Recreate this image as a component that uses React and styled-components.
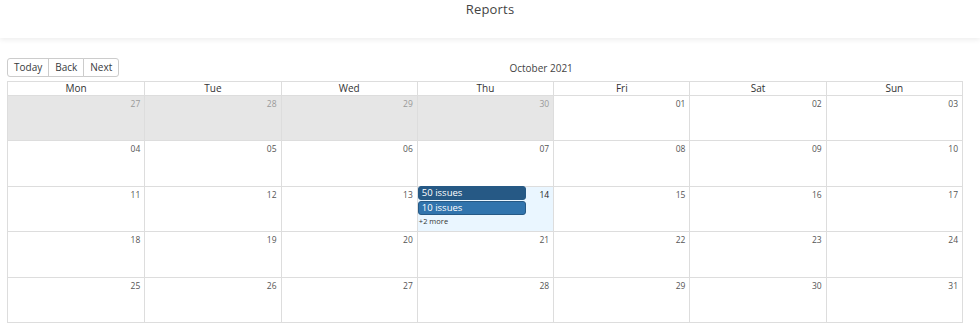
import React from "react";
import styled, { createGlobalStyle } from "styled-components";

const GlobalStyle = createGlobalStyle`
  body {
    margin: 0;
    background: #fff;
    font-family: "Open Sans", "Liberation Sans", sans-serif;
    color: #373a3c;
  }
`;

const TopBar = styled.header`
  height: 38px;
  display: flex;
  justify-content: center;
  background: #fff;
  box-shadow: 0 2px 5px rgba(0, 0, 0, 0.07);
`;

const Title = styled.h1`
  margin: 0;
  font-size: 13px;
  font-weight: 400;
  letter-spacing: 0.2px;
  color: #444;
`;

const CalendarWrap = styled.div`
  width: 956px;
  margin: 20px 0 0 7px;
`;

const Toolbar = styled.div`
  display: flex;
  align-items: center;
  height: 19px;
  margin-bottom: 4px;
`;

const ButtonGroup = styled.div`
  display: flex;
`;

const ToolButton = styled.button`
  font-family: inherit;
  font-size: 10px;
  color: #373a3c;
  background: #fff;
  border: 1px solid #ccc;
  margin-left: -1px;
  padding: 0 6px;
  height: 19px;
  line-height: 17px;
  cursor: pointer;

  &:first-child {
    margin-left: 0;
    border-radius: 3px 0 0 3px;
  }
  &:last-child {
    border-radius: 0 3px 3px 0;
  }
`;

const MonthLabel = styled.span`
  flex: 1;
  text-align: center;
  font-size: 10px;
  color: #444;
`;

const Grid = styled.div`
  display: grid;
  grid-template-columns: repeat(7, 1fr);
  border: 1px solid #ddd;
`;

const DayHead = styled.div`
  height: 13px;
  line-height: 13px;
  text-align: center;
  font-size: 10px;
  font-weight: 500;
  color: #333;
  border-bottom: 1px solid #ddd;
  border-left: ${(p) => (p.first ? "none" : "1px solid #ddd")};
`;

const Cell = styled.div`
  height: 44.4px;
  display: flex;
  align-items: flex-start;
  background: ${(p) => (p.off ? "#e6e6e6" : p.today ? "#eaf6ff" : "#fff")};
  border-left: ${(p) => (p.first ? "none" : "1px solid #ddd")};
  border-top: ${(p) => (p.firstRow ? "none" : "1px solid #ddd")};
`;

const Events = styled.div`
  width: 80%;
  display: flex;
  flex-direction: column;
  gap: 1px;
  margin-top: -1px;
`;

const EventChip = styled.div`
  box-sizing: border-box;
  height: 14px;
  line-height: 12px;
  font-size: 9.5px;
  color: #fff;
  padding: 0 3px;
  border-radius: 3px;
  background: ${(p) => p.bg};
  border: 1px solid #265985;
`;

const More = styled.div`
  font-size: 7.5px;
  color: #333;
  padding: 0 0 0 1px;
`;

const DateNum = styled.span`
  margin-left: auto;
  padding: 2px 4px 0 0;
  font-size: 8.5px;
  color: ${(p) => (p.off ? "#999" : p.bold ? "#222" : "#555")};
`;

const days = ["Mon", "Tue", "Wed", "Thu", "Fri", "Sat", "Sun"];

const cells = [];
[27, 28, 29, 30].forEach((d) => cells.push({ n: d, off: true }));
for (let d = 1; d <= 31; d++) cells.push({ n: d, off: false });

const label = (n) => (n < 10 ? "0" + n : String(n));

export default function App() {
  return (
    <>
      <GlobalStyle />
      <TopBar>
        <Title>Reports</Title>
      </TopBar>
      <CalendarWrap>
        <Toolbar>
          <ButtonGroup>
            <ToolButton>Today</ToolButton>
            <ToolButton>Back</ToolButton>
            <ToolButton>Next</ToolButton>
          </ButtonGroup>
          <MonthLabel>October 2021</MonthLabel>
        </Toolbar>
        <Grid>
          {days.map((d, i) => (
            <DayHead key={d} first={i === 0}>
              {d}
            </DayHead>
          ))}
          {cells.map((c, i) => {
            const isToday = !c.off && c.n === 14;
            return (
              <Cell key={i} off={c.off} today={isToday} first={i % 7 === 0} firstRow={i < 7}>
                {isToday && (
                  <Events>
                    <EventChip bg="#265985">50 issues</EventChip>
                    <EventChip bg="#3174ad">10 issues</EventChip>
                    <More>+2 more</More>
                  </Events>
                )}
                <DateNum off={c.off} bold={isToday}>
                  {label(c.n)}
                </DateNum>
              </Cell>
            );
          })}
        </Grid>
      </CalendarWrap>
    </>
  );
}
